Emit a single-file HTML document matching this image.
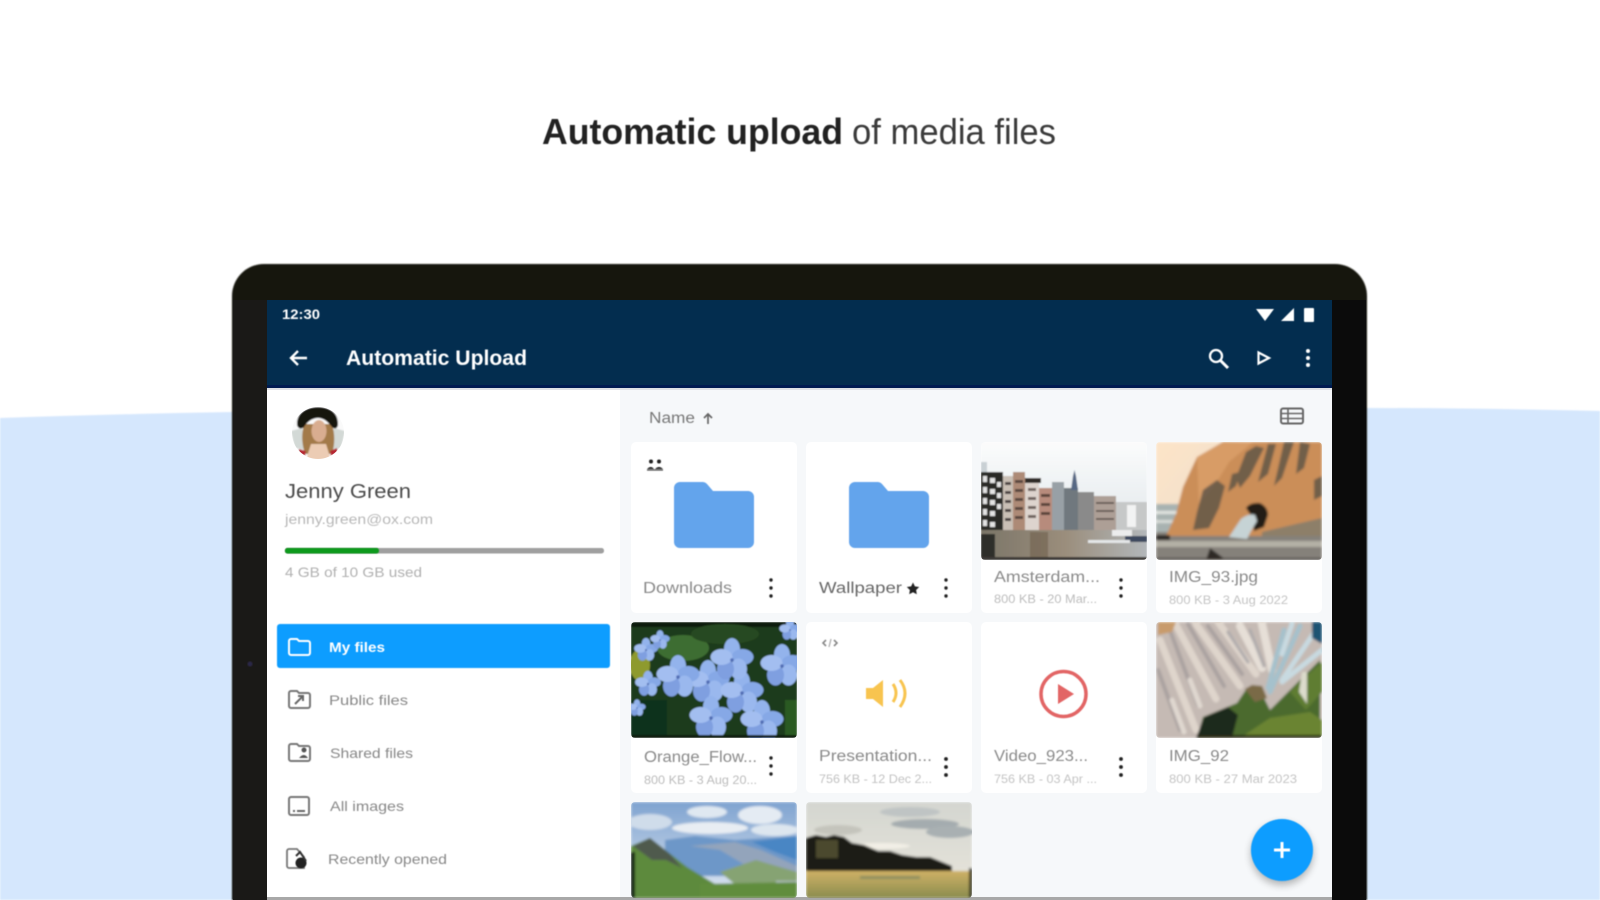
<!DOCTYPE html>
<html lang="en"><head><meta charset="utf-8"><title>Automatic upload of media files</title>
<style>
html,body{margin:0;padding:0;background:#fff;width:1600px;height:900px;overflow:hidden}
svg{display:block;position:absolute;left:0;top:0}
text{font-family:"Liberation Sans",sans-serif}
</style></head><body>
<svg width="1600" height="900" viewBox="0 0 1600 900" xmlns="http://www.w3.org/2000/svg">
<defs>
<filter id="b" x="-5%" y="-5%" width="110%" height="110%"><feGaussianBlur stdDeviation="0.7"/></filter>
<filter id="t" x="-5%" y="-30%" width="110%" height="160%"><feGaussianBlur stdDeviation="0.65"/></filter>
<filter id="i" x="0" y="0" width="100%" height="100%"><feGaussianBlur stdDeviation="1.4"/></filter>
<filter id="s" x="-30%" y="-30%" width="160%" height="170%"><feGaussianBlur stdDeviation="4"/></filter>
<linearGradient id="sky1" x1="0" y1="0" x2="0" y2="1"><stop offset="0" stop-color="#fbfcfc"/><stop offset="1" stop-color="#d9e1e6"/></linearGradient>
<linearGradient id="sky2" x1="0" y1="0" x2="1" y2="0.6"><stop offset="0" stop-color="#fde4c8"/><stop offset="1" stop-color="#e6dcce"/></linearGradient>
<linearGradient id="sky3" x1="0" y1="0" x2="0" y2="1"><stop offset="0" stop-color="#7fa3d0"/><stop offset="1" stop-color="#e0e8f2"/></linearGradient>
<linearGradient id="sky4" x1="0" y1="0" x2="0" y2="1"><stop offset="0" stop-color="#d4d6d0"/><stop offset="1" stop-color="#e9e6dc"/></linearGradient>
<linearGradient id="water" x1="0" y1="0" x2="1" y2="0"><stop offset="0" stop-color="#7b7568"/><stop offset="0.5" stop-color="#9a8d7b"/><stop offset="1" stop-color="#b2b7ba"/></linearGradient>
<linearGradient id="fld" x1="0" y1="0" x2="0" y2="1"><stop offset="0" stop-color="#cfb166"/><stop offset="1" stop-color="#8a8c4e"/></linearGradient>
<clipPath id="c1"><rect x="981" y="442" width="166" height="118" rx="4"/></clipPath>
<clipPath id="c2"><rect x="1156" y="442" width="166" height="118" rx="4"/></clipPath>
<clipPath id="c3"><rect x="631" y="622" width="166" height="116" rx="4"/></clipPath>
<clipPath id="c4"><rect x="1156" y="622" width="166" height="116" rx="4"/></clipPath>
<clipPath id="c5"><rect x="631" y="802" width="166" height="96" rx="4"/></clipPath>
<clipPath id="c6"><rect x="806" y="802" width="166" height="96" rx="4"/></clipPath>
<clipPath id="av"><circle cx="318" cy="433" r="26"/></clipPath>
<g id="fl">
<ellipse cx="0" cy="-11" rx="8" ry="11" fill="#93b3ec"/>
<ellipse cx="10.500" cy="-3" rx="11" ry="8" fill="#86a8e6"/>
<ellipse cx="6.500" cy="9" rx="8.500" ry="10.500" fill="#9ab8ee"/>
<ellipse cx="-6.500" cy="9" rx="8.500" ry="10.500" fill="#7f9fe0"/>
<ellipse cx="-10.500" cy="-3" rx="11" ry="8" fill="#a3bef0"/>
<circle r="1.800" fill="#4f6cb4"/>
</g>
</defs>

<!-- background wave -->
<path d="M0 418 Q120 414 232 412 L1367 408 Q1480 408 1600 411 L1600 900 L0 900Z" fill="#d5e7fd" filter="url(#b)"/>

<!-- device -->
<path d="M232 900V296a32 32 0 0 1 32-32H1335a32 32 0 0 1 32 32V900Z" fill="#121211" filter="url(#b)"/>
<rect x="233" y="300" width="34" height="600" fill="#1a1917"/>
<rect x="1332" y="300" width="34" height="600" fill="#0b0b0b"/>
<circle cx="250" cy="664" r="2.500" fill="#2b2848" filter="url(#b)"/>

<!-- screen -->
<rect x="267" y="300" width="1065" height="598" fill="#f6f8fa"/>
<rect x="267" y="389" width="353" height="509" fill="#fff"/>
<rect x="267" y="300" width="1065" height="87" fill="#032d4f"/>
<rect x="267" y="385" width="1065" height="3" fill="#001b52"/>
<rect x="267" y="388" width="1065" height="2" fill="#dfe2e6"/>
<rect x="267" y="897" width="1065" height="3" fill="#a8a8a8"/>

<g filter="url(#t)">
<!-- status and toolbar -->
<text x="282" y="319" font-size="14" font-weight="700" fill="#fff" textLength="38" lengthAdjust="spacingAndGlyphs">12:30</text>
<path d="M1256 309h18l-9 12z" fill="#fff"/>
<path d="M1294 308v13h-13z" fill="#fff"/>
<rect x="1304" y="308" width="10" height="14" rx="1" fill="#fff"/>
<path d="M307 358h-16M298 351l-7 7 7 7" fill="none" stroke="#fff" stroke-width="2.400"/>
<text x="346" y="365" font-size="21" font-weight="700" fill="#fff" textLength="181" lengthAdjust="spacingAndGlyphs">Automatic Upload</text>
<circle cx="1216" cy="356" r="6" fill="none" stroke="#fff" stroke-width="2.300"/>
<path d="M1220 360l8 8" stroke="#fff" stroke-width="3"/>
<path d="M1258.500 352.500l10.500 5.500-10.500 5.500z" fill="none" stroke="#fff" stroke-width="2.200"/>
<circle cx="1308" cy="351" r="2" fill="#fff"/><circle cx="1308" cy="358" r="2" fill="#fff"/><circle cx="1308" cy="365" r="2" fill="#fff"/>

<!-- profile -->
<text x="285" y="498" font-size="20" fill="#4b4b4b" textLength="126" lengthAdjust="spacingAndGlyphs">Jenny Green</text>
<text x="285" y="524" font-size="14" fill="#b8b8b8" textLength="148" lengthAdjust="spacingAndGlyphs">jenny.green@ox.com</text>
<text x="285" y="577" font-size="14" fill="#b0b0b0" textLength="137" lengthAdjust="spacingAndGlyphs">4 GB of 10 GB used</text>
</g>

<!-- avatar -->
<g clip-path="url(#av)" filter="url(#b)">
<rect x="290" y="405" width="56" height="56" fill="#fafafa"/>
<path d="M291 431l11-3 4 22-11-2zM345 431l-11-3-4 22 11-2z" fill="#d3d9d6"/>
<path d="M304 424c-3 12-2 20 1 30h27c3-10 3-20 0-30z" fill="#a37a48"/>
<path d="M297 424c0-12 10-17 21-17s20 5 20 17c0 4-3 6-6 3-4-5-8-9-14-9s-11 4-14 9c-3 3-7 1-7-3z" fill="#181210"/>
<ellipse cx="319" cy="431" rx="7.500" ry="11" fill="#d9ad90"/>
<path d="M311 444h15l5 16h-25z" fill="#ecccb4"/>
<path d="M299 449l7 2-1 5-7-2zM337 448l-7 3 1 5 7-2z" fill="#b52632"/>
</g>

<!-- progress -->
<rect x="285" y="548" width="319" height="5.500" rx="2.500" fill="#9f9f9f" filter="url(#t)"/>
<rect x="285" y="548" width="94" height="5.500" rx="2.500" fill="#119a1e" filter="url(#t)"/>

<!-- nav -->
<rect x="277" y="624" width="333" height="44" rx="3" fill="#0a9dff" filter="url(#t)"/>
<g filter="url(#t)">
<path d="M289 641a2 2 0 0 1 2-2h6l2 2h9a2 2 0 0 1 2 2v10a2 2 0 0 1-2 2h-17a2 2 0 0 1-2-2z" fill="none" stroke="#fff" stroke-width="2"/>
<text x="329" y="652" font-size="14" font-weight="700" fill="#fff" textLength="56" lengthAdjust="spacingAndGlyphs">My files</text>
<path d="M289 693a2 2 0 0 1 2-2h6l2 2h9a2 2 0 0 1 2 2v11a2 2 0 0 1-2 2h-17a2 2 0 0 1-2-2z" fill="none" stroke="#777" stroke-width="2"/>
<path d="M295 704l8-8M298 696h5v5" fill="none" stroke="#666" stroke-width="2"/>
<text x="329" y="705" font-size="14" fill="#888" textLength="79" lengthAdjust="spacingAndGlyphs">Public files</text>
<path d="M289 746a2 2 0 0 1 2-2h6l2 2h9a2 2 0 0 1 2 2v11a2 2 0 0 1-2 2h-17a2 2 0 0 1-2-2z" fill="none" stroke="#777" stroke-width="2"/>
<circle cx="304" cy="750" r="2.500" fill="#555"/><path d="M299 758q5-6 9 0z" fill="#555"/>
<text x="330" y="758" font-size="14" fill="#888" textLength="83" lengthAdjust="spacingAndGlyphs">Shared files</text>
<rect x="289" y="797" width="20" height="18" rx="2" fill="none" stroke="#777" stroke-width="2"/>
<path d="M297 811h8" stroke="#666" stroke-width="2"/><path d="M293 811h2" stroke="#666" stroke-width="2"/>
<text x="330" y="811" font-size="14" fill="#888" textLength="74" lengthAdjust="spacingAndGlyphs">All images</text>
<path d="M287 851a2 2 0 0 1 2-2h8l7 8v11h-15a2 2 0 0 1-2-2z" fill="none" stroke="#777" stroke-width="1.800"/>
<circle cx="301" cy="863" r="5.500" fill="#222"/><path d="M296 856l4-4 6 9" fill="none" stroke="#333" stroke-width="2"/>
<text x="328" y="864" font-size="14" fill="#888" textLength="119" lengthAdjust="spacingAndGlyphs">Recently opened</text>

<!-- list header -->
<text x="649" y="423" font-size="15.500" fill="#777" textLength="46" lengthAdjust="spacingAndGlyphs">Name</text>
<path d="M708 424v-10M704 418l4-4 4 4" fill="none" stroke="#666" stroke-width="1.700"/>
<rect x="1281" y="408.500" width="22" height="15" rx="2" fill="none" stroke="#666" stroke-width="2"/>
<path d="M1281 413.500h22M1281 418.500h22M1288 408.500v15" stroke="#666" stroke-width="1.600" fill="none"/>
</g>

<!-- cards -->
<g fill="#fff">
<rect x="631" y="442" width="166" height="171" rx="5"/>
<rect x="806" y="442" width="166" height="171" rx="5"/>
<rect x="981" y="442" width="166" height="171" rx="5"/>
<rect x="1156" y="442" width="166" height="171" rx="5"/>
<rect x="631" y="622" width="166" height="171" rx="5"/>
<rect x="806" y="622" width="166" height="171" rx="5"/>
<rect x="981" y="622" width="166" height="171" rx="5"/>
<rect x="1156" y="622" width="166" height="171" rx="5"/>
</g>

<!-- folders -->
<g filter="url(#t)" fill="#63a4ec">
<path d="M674 488a6 6 0 0 1 6-6h23a6 6 0 0 1 4 2l6 7h35a6 6 0 0 1 6 6v45a6 6 0 0 1-6 6h-68a6 6 0 0 1-6-6z"/>
<path d="M849 488a6 6 0 0 1 6-6h23a6 6 0 0 1 4 2l6 7h35a6 6 0 0 1 6 6v45a6 6 0 0 1-6 6h-68a6 6 0 0 1-6-6z"/>
</g>

<g filter="url(#t)">
<!-- small icons -->
<circle cx="651" cy="461.500" r="2" fill="#222"/><circle cx="659" cy="461.500" r="2" fill="#222"/>
<path d="M647 469q4-4 7 0zM655 469q4-4 8 0z" fill="#222"/>
<path d="M647 470h16" stroke="#444" stroke-width="1.200"/>
<path d="M826 640l-3 3 3 3M834 640l3 3-3 3" fill="none" stroke="#888" stroke-width="1.600"/><path d="M831 639l-2 8" stroke="#aaa" stroke-width="1.200"/>

<!-- labels row 1 -->
<text x="643" y="593" font-size="15.500" fill="#8a8a8a" textLength="89" lengthAdjust="spacingAndGlyphs">Downloads</text>
<text x="819" y="593" font-size="15.500" fill="#666" textLength="83" lengthAdjust="spacingAndGlyphs">Wallpaper</text>
<path d="M913 582.500l1.900 3.900 4.300.6-3.100 3 .7 4.300-3.800-2-3.800 2 .7-4.300-3.100-3 4.300-.6z" fill="#222"/>
<text x="994" y="582" font-size="15.500" fill="#8a8a8a" textLength="106" lengthAdjust="spacingAndGlyphs">Amsterdam...</text>
<text x="994" y="603" font-size="11.500" fill="#bcbcbc" textLength="103" lengthAdjust="spacingAndGlyphs">800 KB - 20 Mar...</text>
<text x="1169" y="582" font-size="15.500" fill="#8a8a8a" textLength="89" lengthAdjust="spacingAndGlyphs">IMG_93.jpg</text>
<text x="1169" y="604" font-size="11.500" fill="#c4c4c4" textLength="119" lengthAdjust="spacingAndGlyphs">800 KB - 3 Aug 2022</text>

<!-- labels row 2 -->
<text x="644" y="762" font-size="15.500" fill="#8a8a8a" textLength="113" lengthAdjust="spacingAndGlyphs">Orange_Flow...</text>
<text x="644" y="784" font-size="11.500" fill="#bcbcbc" textLength="113" lengthAdjust="spacingAndGlyphs">800 KB - 3 Aug 20...</text>
<text x="819" y="761" font-size="15.500" fill="#8a8a8a" textLength="113" lengthAdjust="spacingAndGlyphs">Presentation...</text>
<text x="819" y="783" font-size="11.500" fill="#c2c2c2" textLength="113" lengthAdjust="spacingAndGlyphs">756 KB - 12 Dec 2...</text>
<text x="994" y="761" font-size="15.500" fill="#8a8a8a" textLength="94" lengthAdjust="spacingAndGlyphs">Video_923...</text>
<text x="994" y="783" font-size="11.500" fill="#c4c4c4" textLength="103" lengthAdjust="spacingAndGlyphs">756 KB - 03 Apr ...</text>
<text x="1169" y="761" font-size="15.500" fill="#8a8a8a" textLength="60" lengthAdjust="spacingAndGlyphs">IMG_92</text>
<text x="1169" y="783" font-size="11.500" fill="#c4c4c4" textLength="128" lengthAdjust="spacingAndGlyphs">800 KB - 27 Mar 2023</text>

<!-- three dots -->
<g fill="#222">
<circle cx="771" cy="580" r="1.700"/><circle cx="771" cy="588" r="1.700"/><circle cx="771" cy="596" r="1.700"/>
<circle cx="946" cy="580" r="1.700"/><circle cx="946" cy="588" r="1.700"/><circle cx="946" cy="596" r="1.700"/>
<circle cx="1121" cy="580" r="1.700"/><circle cx="1121" cy="588" r="1.700"/><circle cx="1121" cy="596" r="1.700"/>
<circle cx="771" cy="758" r="1.700"/><circle cx="771" cy="766" r="1.700"/><circle cx="771" cy="774" r="1.700"/>
<circle cx="946" cy="759" r="1.900"/><circle cx="946" cy="767" r="1.900"/><circle cx="946" cy="775" r="1.900"/>
<circle cx="1121" cy="759" r="1.900"/><circle cx="1121" cy="767" r="1.900"/><circle cx="1121" cy="775" r="1.900"/>
</g>

<!-- audio icon -->
<path d="M866 688h7l10-8v27l-10-8h-7z" fill="#f8c44f"/>
<path d="M893 684q6 9 0 18" fill="none" stroke="#f8c44f" stroke-width="3"/>
<path d="M900 680q10 13 0 27" fill="none" stroke="#f8c44f" stroke-width="3"/>

<!-- video icon -->
<circle cx="1063.500" cy="694" r="22.500" fill="none" stroke="#e26565" stroke-width="3.500"/>
<path d="M1058 684l16 10-16 10z" fill="#e26565"/>
</g>

<!-- Amsterdam image -->
<g clip-path="url(#c1)"><g filter="url(#b)">
<rect x="981" y="442" width="166" height="118" fill="url(#sky1)"/>
<rect x="981" y="462" width="6" height="12" fill="#c9d0d4"/>
<rect x="981" y="472" width="22" height="64" fill="#2a2928"/>
<g fill="#e4e4e4"><rect x="983" y="476" width="4" height="6"/><rect x="983" y="487" width="4" height="6"/><rect x="983" y="498" width="4" height="6"/><rect x="983" y="509" width="4" height="6"/><rect x="983" y="520" width="4" height="6"/>
<rect x="990" y="478" width="5" height="5"/><rect x="990" y="489" width="5" height="5"/><rect x="990" y="500" width="5" height="5"/><rect x="990" y="511" width="5" height="5"/><rect x="990" y="522" width="5" height="5"/>
<rect x="997" y="482" width="4" height="5"/><rect x="997" y="493" width="4" height="5"/><rect x="997" y="504" width="4" height="5"/></g>
<rect x="1003" y="476" width="10" height="58" fill="#c9bfb5"/>
<g fill="#4a4340"><rect x="1005" y="482" width="6" height="3"/><rect x="1005" y="491" width="6" height="3"/><rect x="1005" y="500" width="6" height="3"/><rect x="1005" y="509" width="6" height="3"/><rect x="1005" y="518" width="6" height="3"/></g>
<rect x="1013" y="472" width="12" height="62" fill="#ad8a76"/>
<g fill="#5a4740"><rect x="1015" y="480" width="8" height="3"/><rect x="1015" y="489" width="8" height="3"/><rect x="1015" y="498" width="8" height="3"/><rect x="1015" y="507" width="8" height="3"/><rect x="1015" y="516" width="8" height="3"/></g>
<rect x="1025" y="480" width="14" height="54" fill="#ddd4ce"/><rect x="1025" y="478" width="16" height="5" fill="#2f2a27"/>
<g fill="#70635f"><rect x="1028" y="488" width="8" height="3"/><rect x="1028" y="497" width="8" height="3"/><rect x="1028" y="506" width="8" height="3"/><rect x="1028" y="515" width="8" height="3"/></g>
<rect x="1039" y="488" width="13" height="46" fill="#b78b7b"/>
<g fill="#5b443e"><rect x="1041" y="494" width="9" height="3"/><rect x="1041" y="503" width="9" height="3"/><rect x="1041" y="512" width="9" height="3"/></g>
<rect x="1052" y="482" width="12" height="50" fill="#98a0a6"/>
<rect x="1064" y="488" width="14" height="44" fill="#70787e"/>
<path d="M1071 490l2-14 1.500-6 1.500 6 2 14z" fill="#566884"/>
<rect x="1078" y="492" width="16" height="38" fill="#8a8a8a"/>
<rect x="1094" y="496" width="22" height="34" fill="#ad9f96"/>
<g fill="#6a5e58"><rect x="1096" y="502" width="18" height="2"/><rect x="1096" y="510" width="18" height="2"/><rect x="1096" y="518" width="18" height="2"/></g>
<rect x="1116" y="502" width="31" height="28" fill="#c6c8c8"/>
<rect x="1127" y="505" width="9" height="22" fill="#f2f3f3"/>
<rect x="981" y="530" width="166" height="30" fill="url(#water)"/>
<rect x="1030" y="532" width="18" height="28" fill="#705f4c" opacity=".6"/>
<rect x="981" y="534" width="14" height="26" fill="#2f2d2a"/>
<rect x="1112" y="530" width="20" height="6" fill="#eceded"/>
<rect x="1125" y="536" width="22" height="6" fill="#3c4a5e"/>
<rect x="1088" y="540" width="42" height="3" fill="#e4e7e8"/>
<rect x="981" y="557" width="166" height="3" fill="#3a3834"/>
</g></g>

<!-- Rock image -->
<g clip-path="url(#c2)"><g filter="url(#i)">
<rect x="1156" y="442" width="166" height="118" fill="url(#sky2)"/>
<rect x="1156" y="504" width="60" height="30" fill="#a8b2b1"/>
<rect x="1156" y="511" width="40" height="3" fill="#e3e6e2"/><rect x="1156" y="520" width="30" height="3" fill="#d8dcd8"/>
<rect x="1156" y="532" width="166" height="28" fill="#85817a"/>
<rect x="1156" y="541" width="166" height="6" fill="#b4b0a6"/>
<path d="M1223 442H1322V536H1166L1176 514 1183 487 1197 457Z" fill="#cb8e58"/>
<path d="M1197 457l26-14 30-1-24 20-16 26-14 16z" fill="#d89c66"/>
<g fill="#5e5448" opacity=".82">
<path d="M1203 490l14-10 8 6-6 22-10 20-16 2 4-18zM1246 452l10-6 8 2-14 28-10 12-4-10zM1268 444h8l-8 30-10 8zM1284 442h10l-12 36-8 8zM1232 474l8-2-4 14-8 6z"/>
<path d="M1300 442l10 2-6 24-8 6zM1314 480l8-4v20l-8 4z"/>
</g>
<path d="M1246 508q4-6 14-5 8 4 8 12l-4 12-10 4-2-14z" fill="#221c18"/>
<path d="M1229 537l12-18q8-6 14-4l2 6-6 10-4 8z" fill="#c6d3d5"/>
<path d="M1262 532l60-14v18h-60z" fill="#8d7f69"/>
<rect x="1156" y="535" width="14" height="5" fill="#2d2a26"/>
<path d="M1210 548l16 12h-20z" fill="#2d2a26"/>
<rect x="1156" y="558" width="166" height="2" fill="#3a362f"/>
</g></g>

<!-- Flower image -->
<g clip-path="url(#c3)"><g filter="url(#b)">
<rect x="631" y="622" width="166" height="116" fill="#1a3a1c"/>
<rect x="631" y="622" width="166" height="5" fill="#0c1a0c"/>
<ellipse cx="683" cy="648" rx="26" ry="13" fill="#3e6d30"/>
<ellipse cx="640" cy="665" rx="10" ry="16" fill="#8e9a2e"/>
<ellipse cx="725" cy="634" rx="34" ry="10" fill="#274a20"/>
<rect x="631" y="700" width="36" height="38" fill="#10301a"/>
<rect x="785" y="700" width="12" height="38" fill="#2c5a22"/>
<use href="#fl" x="708" y="682"/><use href="#fl" x="742" y="693"/>
<use href="#fl" x="711" y="718"/><use href="#fl" x="762" y="722"/>
<use href="#fl" x="782" y="666"/><use href="#fl" x="732" y="660"/>
<use href="#fl" x="678" y="677"/>
<g transform="translate(646 650) scale(.55)"><use href="#fl"/></g>
<g transform="translate(660 640) scale(.45)"><use href="#fl"/></g>
<g transform="translate(648 684) scale(.6)"><use href="#fl"/></g>
<g transform="translate(790 630) scale(.5)"><use href="#fl"/></g>
<g transform="translate(637 708) scale(.4)"><use href="#fl"/></g>
<rect x="631" y="735" width="166" height="3" fill="#0b1a0c"/>
</g></g>

<!-- Dolomites image -->
<g clip-path="url(#c4)"><g filter="url(#i)">
<rect x="1156" y="622" width="166" height="116" fill="#c5bab4"/>
<g fill="none" stroke-linecap="round">
<path d="M1160 640l36 90M1176 625l40 74M1196 624l44 62M1218 622l38 52" stroke="#dfd5cc" stroke-width="7"/>
<path d="M1168 625l30 80M1188 624l36 62M1208 626l34 48M1158 670l22 60" stroke="#aaa2a0" stroke-width="4"/>
<path d="M1240 626l22 42M1262 624l10 46" stroke="#e6dfd7" stroke-width="8"/>
<path d="M1228 632l20 30M1250 630l14 36" stroke="#aeaaab" stroke-width="3"/>
<path d="M1172 700l12 32M1190 680l10 26" stroke="#e0d8d0" stroke-width="5"/>
<path d="M1284 630l-16 58M1300 626l-30 66" stroke="#a5c1cc" stroke-width="5"/>
<path d="M1292 624l-10 30M1316 630l-34 50M1322 650l-40 32" stroke="#c8dae1" stroke-width="5"/>
</g>
<path d="M1312 622h10v22l-10-6z" fill="#1d5372"/>
<path d="M1158 622h18l-4 10-14 3z" fill="#c89b6c"/>
<path d="M1197 738l6-21 34-14 10-15 13 2 10 20 50-50v78z" fill="#4c6a2f"/>
<path d="M1196 738l8-21 24-10 10 8-6 23z" fill="#1f2b1f"/>
<path d="M1245 689l7-4 10 1 5 12-12 4z" fill="#7a6a46"/>
<path d="M1290 692l14-14 18-16v30l-16 18z" fill="#5f7d32"/>
<path d="M1299 692l3-20 5 0 0 32z" fill="#dcdccc"/>
<path d="M1240 738l30-20 40-6 12 8v18z" fill="#6a8433"/>
<rect x="1197" y="735" width="125" height="3" fill="#2a2a14"/>
</g></g>

<!-- Mountains image -->
<g clip-path="url(#c5)"><g filter="url(#i)">
<rect x="631" y="802" width="166" height="96" fill="url(#sky3)"/>
<ellipse cx="707" cy="812" rx="20" ry="6" fill="#dfe8f1"/><ellipse cx="760" cy="815" rx="22" ry="9" fill="#e4ebf3"/>
<ellipse cx="650" cy="822" rx="22" ry="8" fill="#cfdcea"/><ellipse cx="710" cy="828" rx="38" ry="6" fill="#e8edf3"/>
<ellipse cx="775" cy="830" rx="24" ry="6" fill="#dde6ef"/>
<path d="M665 840l30-4 40 4 62-4v40h-132z" fill="#6d97c8"/>
<path d="M690 846l30 4 30 18 47 6v-8l-36-16-26-8z" fill="#93a4bb"/>
<path d="M752 842l45-6v24l-22-8z" fill="#4a86c4"/>
<path d="M720 872l36-12 41 12v14h-60z" fill="#86a373"/>
<rect x="776" y="881" width="21" height="7" fill="#bdc8d2"/>
<path d="M631 846l19-8 37 29 33 20 77 10v1H631z" fill="#5d8a3c"/>
<path d="M633 846l17-8 20 16 12 14-16-8-14 0z" fill="#4f5a4e"/>
<rect x="631" y="852" width="4" height="46" fill="#101a10"/>
<path d="M700 884l97-2v16H700z" fill="#618d3e"/>
</g></g>

<!-- Field image -->
<g clip-path="url(#c6)"><g filter="url(#i)">
<rect x="806" y="802" width="166" height="96" fill="url(#sky4)"/>
<ellipse cx="910" cy="812" rx="30" ry="5" fill="#bfc4c4"/>
<ellipse cx="925" cy="824" rx="34" ry="5" fill="#a4acaf"/>
<ellipse cx="950" cy="832" rx="24" ry="6" fill="#a9b0b2"/>
<ellipse cx="838" cy="830" rx="24" ry="5" fill="#c4c4bc"/>
<ellipse cx="880" cy="846" rx="30" ry="3" fill="#f2efe6"/>
<path d="M806 838l10-3 10 2 8-2 10 2 8 6 12 2 14 6 12 0 12 4 14 2 14 0 22 9v6H806z" fill="#1a1c12"/>
<path d="M816 840h22v18h-22z" fill="#4c4a2e"/>
<rect x="806" y="871" width="166" height="27" fill="url(#fld)"/>
<rect x="860" y="876" width="60" height="3" fill="#8f9060"/>
<rect x="969" y="868" width="3" height="30" fill="#2c2a14"/>
</g></g>

<!-- FAB -->
<circle cx="1282" cy="854" r="31" fill="#000" opacity=".28" filter="url(#s)"/>
<circle cx="1282" cy="850" r="31" fill="#0a9dff" filter="url(#t)"/>
<path d="M1282 842v16M1274 850h16" stroke="#fff" stroke-width="3" filter="url(#t)"/>

<!-- title -->
<g filter="url(#t)">
<text x="542" y="144" font-size="36" font-weight="700" fill="#232323" textLength="301" lengthAdjust="spacingAndGlyphs">Automatic upload</text>
<text x="852" y="144" font-size="36" fill="#3a3a3a" textLength="204" lengthAdjust="spacingAndGlyphs">of media files</text>
</g>
</svg>
</body></html>
